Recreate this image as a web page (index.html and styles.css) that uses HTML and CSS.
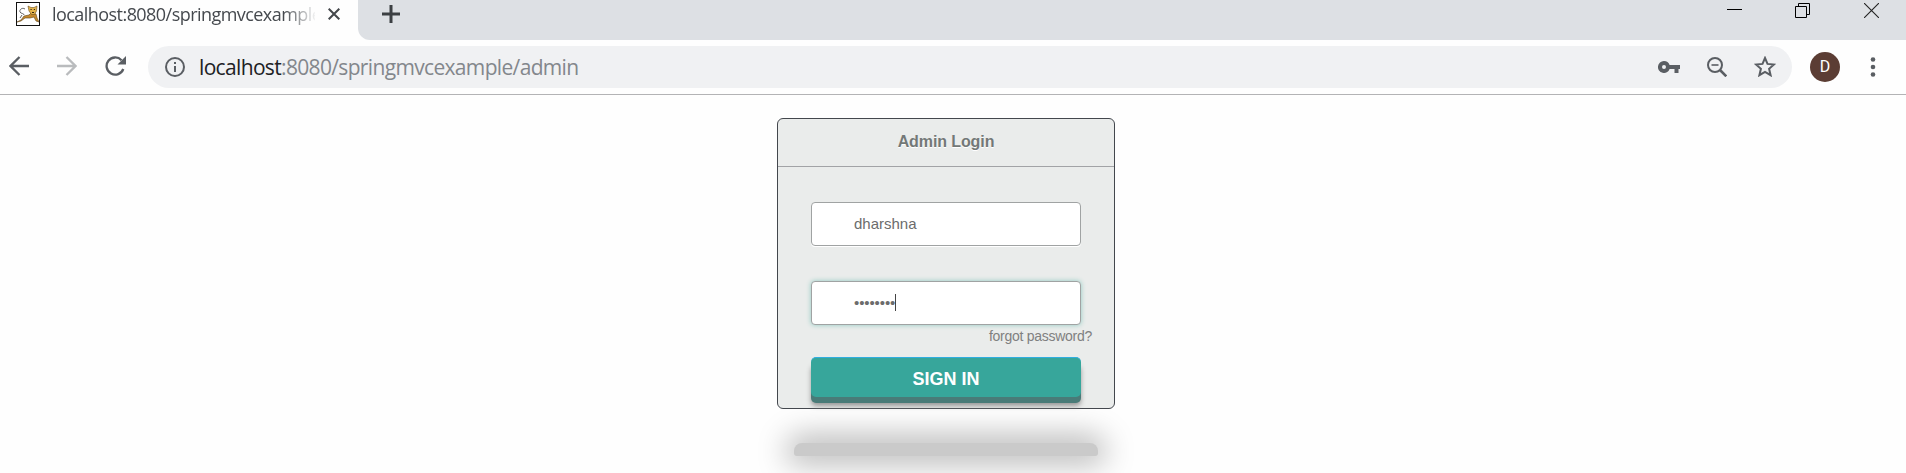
FILE: index.html
```html
<!DOCTYPE html>
<html lang="en">
<head>
<meta charset="utf-8">
<title>Admin Login</title>
<link rel="stylesheet" href="styles.css">
</head>
<body>
<header class="tabstrip">
  <div class="tab">
    <svg class="favicon" width="24" height="24" viewBox="0 0 24 24">
      <rect x=".5" y=".5" width="23" height="23" fill="#fff" stroke="#111"/>
      <path d="M9 7C6 5 3 8 4 10s4 1 4 3M4 16l2-3" fill="none" stroke="#666" stroke-width="1"/>
      <path d="M1 20l4-2 3-4 5-1 2-2 5 1 1 4 2 4-3-1-2-4-4 1-5 0-4 3z" fill="#c58a2e" stroke="#5d4218" stroke-width=".6"/>
      <path d="M12 4l3 1.500h3L21 4l-.5 5-2 3.500h-3L13 9z" fill="#e3b44c" stroke="#6b4d1c" stroke-width=".6"/>
      <path d="M14.500 7.500h1.200M17.800 7.500H19M16 10.500h2" stroke="#35250f" stroke-width="1"/>
    </svg>
    <span class="tab-title">localhost:8080/springmvcexample</span>
    <svg class="tab-close" width="12" height="12" viewBox="0 0 12 12"><path d="M.7.7l10.6 10.6M11.3.7L.7 11.3" stroke="#44474b" stroke-width="2"/></svg>
  </div>
  <div class="strip-rest">
    <svg class="plus" width="18" height="18" viewBox="0 0 18 18"><path d="M9 0v18M0 9h18" stroke="#3c4043" stroke-width="3"/></svg>
    <svg class="win-min" width="15" height="15" viewBox="0 0 15 15"><path d="M0 6.5h15" stroke="#000"/></svg>
    <svg class="win-max" width="15" height="15" viewBox="0 0 15 15"><path d="M.5 3.5h11v11H.5zM3.500 3.500V.5h11v11h-3" fill="none" stroke="#000"/></svg>
    <svg class="win-close" width="15" height="15" viewBox="0 0 15 15"><path d="M0 0l15 15M15 0L0 15" stroke="#222" stroke-width="1.1"/></svg>
  </div>
</header>
<nav class="toolbar">
  <svg class="back" width="20" height="20" viewBox="0 0 20 20"><path d="M20 10H1.500M10.500 1L1.500 10l9 9" fill="none" stroke="#5a5e63" stroke-width="2.300"/></svg>
  <svg class="forward" width="20" height="20" viewBox="0 0 20 20"><path d="M0 10h18.500M9.500 1l9 9-9 9" fill="none" stroke="#b9bbbd" stroke-width="2.300"/></svg>
  <svg class="reload" width="22" height="20" viewBox="0 0 22 20"><path d="M18.300 13A8.600 8.600 0 1 1 16.500 4.200" fill="none" stroke="#5a5e63" stroke-width="2.300"/><path d="M21 0v8.500h-8.500z" fill="#5a5e63"/></svg>
  <div class="omnibox">
    <svg width="20" height="20" viewBox="0 0 20 20"><circle cx="10" cy="10" r="9" fill="none" stroke="#5a5e63" stroke-width="2"/><path d="M10 5v2M10 9v6" stroke="#5a5e63" stroke-width="2"/></svg>
    <span class="url"><span class="host">localhost</span>:8080/springmvcexample/admin</span>
    <svg class="key" width="22" height="12" viewBox="0 0 22 12"><path fill-rule="evenodd" d="M6 0a6 6 0 0 1 5.600 4H22v4h-1.500v4h-4V8h-4.900A6 6 0 1 1 6 0zM6 4a2 2 0 1 0 0 4 2 2 0 0 0 0-4z" fill="#5a5e63"/></svg>
    <svg class="lens" width="20" height="20" viewBox="0 0 20 20"><circle cx="8" cy="8" r="7" fill="none" stroke="#5a5e63" stroke-width="2"/><path d="M4.500 8h7" stroke="#5a5e63" stroke-width="1.600"/><path d="M13 13l6.300 6.300" stroke="#5a5e63" stroke-width="2.600"/></svg>
    <svg class="star" width="22" height="21" viewBox="0 0 22 21"><path d="M11 2l2.500 5.900 6.500.6-4.900 4.300 1.500 6.400-5.600-3.400-5.600 3.400 1.500-6.400L2 8.500l6.500-.6z" fill="none" stroke="#5a5e63" stroke-width="2"/></svg>
  </div>
  <span class="avatar">D</span>
  <svg class="menu" width="6" height="20" viewBox="0 0 6 20"><g fill="#5a5e63"><circle cx="3" cy="2.500" r="2.300"/><circle cx="3" cy="10" r="2.300"/><circle cx="3" cy="17.500" r="2.300"/></g></svg>
</nav>
<main class="page">
  <form class="card">
    <h1 class="card-title">Admin Login</h1>
    <div class="fields">
      <div class="field">dharshna</div>
      <div class="field focused"><span class="dots">••••••••</span><span class="caret"></span></div>
      <a class="forgot">forgot password?</a>
      <button class="signin" type="button">SIGN IN</button>
    </div>
  </form>
  <div class="shadow-bar"></div>
</main>
</body>
</html>
```
FILE: styles.css
```css
* { box-sizing: border-box; }
body { margin: 0; height: 473px; overflow: hidden; background: #fefefe; font-family: "Liberation Sans", Arial, sans-serif; }
svg { display: block; flex: none; }
.tabstrip { display: flex; height: 40px; }
.tab { display: flex; width: 358px; padding: 2px 0 0 16px; }
.tab-title {
  width: 263px; margin-left: 12px; overflow: hidden; white-space: nowrap;
  font: 18px/24px "Open Sans", "Noto Sans", sans-serif; letter-spacing: -.55px; color: #45494e;
  -webkit-mask-image: linear-gradient(90deg, #000 232px, transparent 265px);
  mask-image: linear-gradient(90deg, #000 232px, transparent 265px);
}
.tab-close { margin: 6px 0 0 13px; }
.strip-rest { display: flex; flex: 1; align-items: flex-start; padding: 3px 27px 0 24px; background: #dde0e4; border-bottom-left-radius: 12px; }
.plus { margin: 2px auto 0 0; }
.win-max { margin: 0 54px 0 53px; }
.toolbar { display: flex; align-items: center; height: 55px; padding: 0 30px 1px 9px; border-bottom: 1px solid #b3b3b5; }
.back, .forward, .reload { position: relative; top: -1px; }
.forward { margin-left: 28px; }
.reload { margin-left: 28px; }
.omnibox { display: flex; align-items: center; width: 1644px; height: 42px; margin-left: 21px; padding: 0 16px 0 17px; border-radius: 21px; background: #f0f1f3; }
.url { margin: 0 auto 0 14px; font: 21px/30px "Open Sans", "Noto Sans", sans-serif; letter-spacing: -.66px; color: #83878c; white-space: nowrap; }
.host { color: #202124; }
.lens { margin: 0 27px; }
.avatar { display: flex; align-items: center; justify-content: center; width: 30px; height: 30px; margin: 0 auto 0 18px; border-radius: 50%; background: #5b3d34; color: #fff; font: 16px Roboto, sans-serif; }
.page { display: flex; flex-direction: column; align-items: center; padding: 23px 14px 0 0; }
.card { width: 338px; height: 291px; border: 1px solid #43474d; border-radius: 6px; background: #eaeceb; }
.card-title { height: 48px; margin: 0; padding-top: 1px; border-bottom: 1px solid #a2a3a6; font-size: 16px; line-height: 44px; letter-spacing: -.1px; text-align: center; color: #737877; text-shadow: 0 1px #fff; }
.fields { display: flex; flex-direction: column; padding: 35px 33px 0; }
.field { display: flex; align-items: center; height: 44px; margin-bottom: 35px; padding: 0 0 2px 42px; border: 1px solid #a0a3a3; border-radius: 4px; background: #fff; color: #6c6c6c; font-size: 15px; box-shadow: 0 1px #fff; }
.focused { margin-bottom: 0; box-shadow: 0 0 5px #8fc9c1; }
.dots { letter-spacing: -.1px; }
.caret { width: 1px; height: 17px; background: #444; }
.forgot { align-self: flex-end; height: 32px; margin-right: -11px; padding-top: 3px; font-size: 14px; line-height: 16px; letter-spacing: -.27px; color: #808080; white-space: nowrap; }
.signin { height: 40px; padding: 3px 0 0; border: 0; border-top: 1px solid #30aee0; border-radius: 5px; background: #37a69b; color: #fff; font: bold 18px "Liberation Sans", Arial, sans-serif; box-shadow: 0 6px #497b78, 0 9px 5px #999; }
.shadow-bar { width: 304px; height: 13px; margin-top: 34px; border-radius: 8px 8px 3px 3px; background: #cacaca; box-shadow: 0 0 30px 8px rgba(0,0,0,.28); clip-path: inset(-33px -60px -60px); }
```
